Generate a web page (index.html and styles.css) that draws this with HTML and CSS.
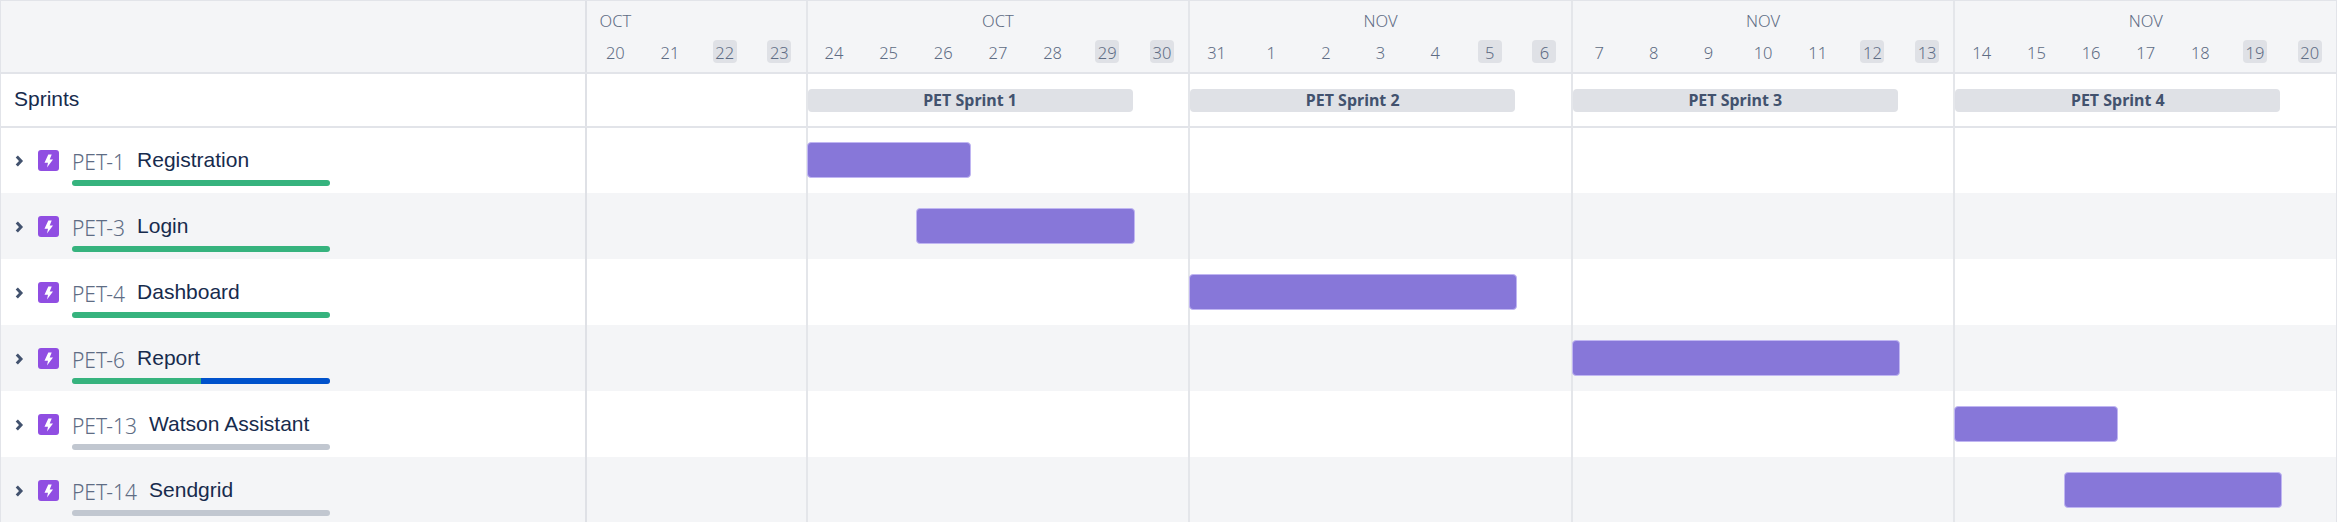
FILE: index.html
```html
<html>
<head>
<title>Roadmap</title>
<link rel="stylesheet" href="styles.css">
</head>
<body>
<div class="gantt">
  <div class="row head">
    <div class="side"></div>
    <div class="track">
      <div class="week short">
        <span class="month">OCT</span>
        <span class="day">20</span><span class="day">21</span><span class="day"><b>22</b></span><span class="day"><b>23</b></span>
      </div>
      <div class="week">
        <span class="month">OCT</span>
        <span class="day">24</span><span class="day">25</span><span class="day">26</span><span class="day">27</span><span class="day">28</span><span class="day"><b>29</b></span><span class="day"><b>30</b></span>
      </div>
      <div class="week">
        <span class="month">NOV</span>
        <span class="day">31</span><span class="day">1</span><span class="day">2</span><span class="day">3</span><span class="day">4</span><span class="day"><b>5</b></span><span class="day"><b>6</b></span>
      </div>
      <div class="week">
        <span class="month">NOV</span>
        <span class="day">7</span><span class="day">8</span><span class="day">9</span><span class="day">10</span><span class="day">11</span><span class="day"><b>12</b></span><span class="day"><b>13</b></span>
      </div>
      <div class="week">
        <span class="month">NOV</span>
        <span class="day">14</span><span class="day">15</span><span class="day">16</span><span class="day">17</span><span class="day">18</span><span class="day"><b>19</b></span><span class="day"><b>20</b></span>
      </div>
    </div>
  </div>

  <div class="row sprints">
    <div class="side"><span class="sprints-label">Sprints</span></div>
    <div class="track">
      <div class="week short"></div>
      <div class="week"><div class="sprint">PET Sprint 1</div></div>
      <div class="week"><div class="sprint">PET Sprint 2</div></div>
      <div class="week"><div class="sprint">PET Sprint 3</div></div>
      <div class="week"><div class="sprint">PET Sprint 4</div></div>
    </div>
  </div>

  <div class="row task">
    <div class="side">
      <svg class="chevron" viewBox="0 0 8 12"><path d="M1.800 1.500 6 6l-4.200 4.500"/></svg>
      <svg class="epic" viewBox="0 0 21 21"><rect width="21" height="21" rx="3"/><path d="M10.300 4.500 6.500 12.800h3.500L9 17.500l6-8.100h-3.300l2-4.900z"/></svg>
      <div class="issue">
        <div class="names"><span class="key">PET-1</span><span class="title">Registration</span></div>
        <div class="progress"><i class="done full"></i></div>
      </div>
    </div>
    <div class="track">
      <div class="week short"></div>
      <div class="week"><div class="bar from0 len3"></div></div>
      <div class="week"></div>
      <div class="week"></div>
      <div class="week"></div>
    </div>
  </div>

  <div class="row task alt">
    <div class="side">
      <svg class="chevron" viewBox="0 0 8 12"><path d="M1.800 1.500 6 6l-4.200 4.500"/></svg>
      <svg class="epic" viewBox="0 0 21 21"><rect width="21" height="21" rx="3"/><path d="M10.300 4.500 6.500 12.800h3.500L9 17.500l6-8.100h-3.300l2-4.900z"/></svg>
      <div class="issue">
        <div class="names"><span class="key">PET-3</span><span class="title">Login</span></div>
        <div class="progress"><i class="done full"></i></div>
      </div>
    </div>
    <div class="track">
      <div class="week short"></div>
      <div class="week"><div class="bar from2 len4"></div></div>
      <div class="week"></div>
      <div class="week"></div>
      <div class="week"></div>
    </div>
  </div>

  <div class="row task">
    <div class="side">
      <svg class="chevron" viewBox="0 0 8 12"><path d="M1.800 1.500 6 6l-4.200 4.500"/></svg>
      <svg class="epic" viewBox="0 0 21 21"><rect width="21" height="21" rx="3"/><path d="M10.300 4.500 6.500 12.800h3.500L9 17.500l6-8.100h-3.300l2-4.900z"/></svg>
      <div class="issue">
        <div class="names"><span class="key">PET-4</span><span class="title">Dashboard</span></div>
        <div class="progress"><i class="done full"></i></div>
      </div>
    </div>
    <div class="track">
      <div class="week short"></div>
      <div class="week"></div>
      <div class="week"><div class="bar from0 len6"></div></div>
      <div class="week"></div>
      <div class="week"></div>
    </div>
  </div>

  <div class="row task alt">
    <div class="side">
      <svg class="chevron" viewBox="0 0 8 12"><path d="M1.800 1.500 6 6l-4.200 4.500"/></svg>
      <svg class="epic" viewBox="0 0 21 21"><rect width="21" height="21" rx="3"/><path d="M10.300 4.500 6.500 12.800h3.500L9 17.500l6-8.100h-3.300l2-4.900z"/></svg>
      <div class="issue">
        <div class="names"><span class="key">PET-6</span><span class="title">Report</span></div>
        <div class="progress"><i class="done half"></i><i class="doing"></i></div>
      </div>
    </div>
    <div class="track">
      <div class="week short"></div>
      <div class="week"></div>
      <div class="week"></div>
      <div class="week"><div class="bar from0 len6"></div></div>
      <div class="week"></div>
    </div>
  </div>

  <div class="row task">
    <div class="side">
      <svg class="chevron" viewBox="0 0 8 12"><path d="M1.800 1.500 6 6l-4.200 4.500"/></svg>
      <svg class="epic" viewBox="0 0 21 21"><rect width="21" height="21" rx="3"/><path d="M10.300 4.500 6.500 12.800h3.500L9 17.500l6-8.100h-3.300l2-4.900z"/></svg>
      <div class="issue">
        <div class="names"><span class="key">PET-13</span><span class="title">Watson Assistant</span></div>
        <div class="progress"></div>
      </div>
    </div>
    <div class="track">
      <div class="week short"></div>
      <div class="week"></div>
      <div class="week"></div>
      <div class="week"></div>
      <div class="week"><div class="bar from0 len3"></div></div>
    </div>
  </div>

  <div class="row task alt">
    <div class="side">
      <svg class="chevron" viewBox="0 0 8 12"><path d="M1.800 1.500 6 6l-4.200 4.500"/></svg>
      <svg class="epic" viewBox="0 0 21 21"><rect width="21" height="21" rx="3"/><path d="M10.300 4.500 6.500 12.800h3.500L9 17.500l6-8.100h-3.300l2-4.900z"/></svg>
      <div class="issue">
        <div class="names"><span class="key">PET-14</span><span class="title">Sendgrid</span></div>
        <div class="progress"></div>
      </div>
    </div>
    <div class="track">
      <div class="week short"></div>
      <div class="week"></div>
      <div class="week"></div>
      <div class="week"></div>
      <div class="week"><div class="bar from2 len4"></div></div>
    </div>
  </div>
</div>
</body>
</html>
```

FILE: styles.css
```css
html, body {
  margin: 0;
  height: 522px;
  overflow: hidden;
  background-color: white;
}
.gantt {
  height: 522px;
  box-sizing: border-box;
  border: 1px solid #e2e4e9;
  border-bottom: 0;
  overflow: hidden;
  color: #172b4d;
  font-family: "Noto Sans", sans-serif;
}
.row {
  display: flex;
}
.head {
  height: 71px;
  background-color: #f4f5f7;
  border-bottom: 2px solid #e2e4e9;
}
.sprints {
  height: 52px;
  border-bottom: 1px solid #e2e4e9;
}
.sprints + .task {
  box-shadow: inset 0 1px 0 #e2e4e9;
}
.task {
  height: 66px;
}
.alt {
  background-color: #f4f5f7;
}
.side {
  width: 584px;
  flex: none;
  display: flex;
  align-items: flex-start;
  border-right: 2px solid #dfe1e6;
}
.track {
  flex: 1;
  min-width: 0;
  display: grid;
  grid-template-columns: 4fr 7fr 7fr 7fr 7fr;
}

/* weeks */
.week {
  display: grid;
  grid-template-columns: repeat(7, 1fr);
  align-items: center;
  min-width: 0;
  box-shadow: inset 2px 0 0 #e4e6ea;
}
.week.short {
  grid-template-columns: repeat(4, 1fr);
  box-shadow: none;
}
.head .week {
  grid-template-rows: 39px 24px;
  align-items: start;
}
.month {
  grid-column: 4;
  grid-row: 1;
  padding-left: 2px;
  text-align: center;
  white-space: nowrap;
  font-size: 16.5px;
  font-weight: 300;
  line-height: 39px;
  color: #5e6c84;
}
.short .month {
  grid-column: 1;
}
.day {
  grid-row: 2;
  height: 23px;
  padding-left: 2px;
  text-align: center;
  font-size: 16.5px;
  font-weight: 300;
  line-height: 25px;
  color: #5e6c84;
}
.day b {
  display: inline-block;
  width: 24px;
  height: 23px;
  border-radius: 4px;
  background-color: #dfe1e6;
  font-weight: 300;
}

/* left column */
.sprints-label {
  margin-left: 13px;
  font-family: "Liberation Sans", sans-serif;
  font-size: 21px;
  line-height: 50px;
}
.chevron {
  flex: none;
  width: 8px;
  height: 12px;
  margin-left: 14px;
  margin-top: 28px;
  overflow: visible;
  fill: none;
  stroke: #42526e;
  stroke-width: 3;
}
.epic {
  flex: none;
  width: 21px;
  height: 21px;
  margin-left: 15px;
  margin-top: 23px;
}
.epic rect {
  fill: #904ee2;
}
.epic path {
  fill: white;
}
.issue {
  margin-left: 13px;
  width: 258px;
}
.names {
  display: flex;
  align-items: flex-start;
  gap: 12px;
  height: 53px;
  box-sizing: border-box;
  padding-top: 20px;
  white-space: nowrap;
}
.key {
  font-size: 21px;
  font-weight: 300;
  line-height: 30px;
  color: #5e6c84;
}
.title {
  font-family: "Liberation Sans", sans-serif;
  font-size: 21px;
  line-height: 26px;
}
.progress {
  display: flex;
  height: 6px;
  border-radius: 3px;
  overflow: hidden;
  background-color: #c1c7d0;
}
.done {
  background-color: #36b37e;
}
.doing {
  flex: 1;
  background-color: #0052cc;
}
.full {
  width: 100%;
}
.half {
  width: 50%;
}

/* sprint and task bars */
.sprint {
  grid-column: 1 / span 6;
  height: 23px;
  margin: 0 1px 0 2px;
  border-radius: 4px;
  background-color: #dfe1e6;
  color: #42526e;
  font-size: 16px;
  font-weight: 700;
  line-height: 23px;
  text-align: center;
}
.bar {
  height: 36px;
  box-sizing: border-box;
  margin: 0 -1px 0 1px;
  border: 1px solid #c0b6f2;
  border-radius: 4px;
  background-color: #8777d9;
}
.from0 { grid-column-start: 1; }
.from2 { grid-column-start: 3; }
.len3 { grid-column-end: span 3; }
.len4 { grid-column-end: span 4; }
.len6 { grid-column-end: span 6; }
```
